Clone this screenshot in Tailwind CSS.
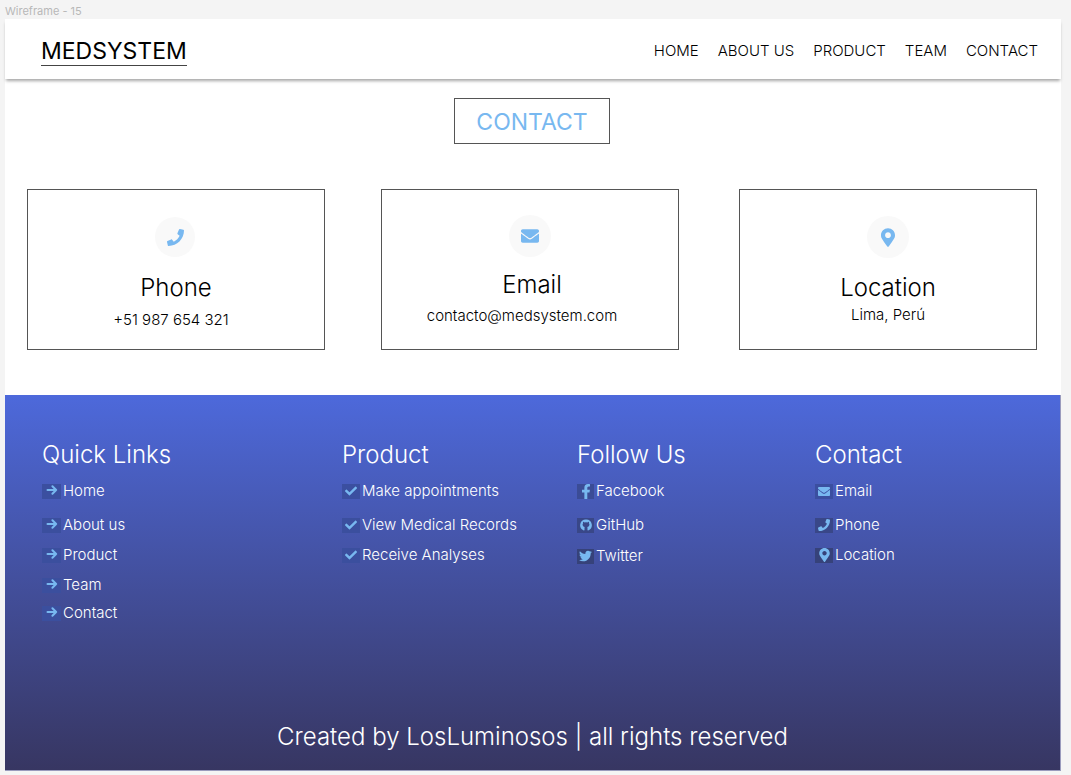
<!DOCTYPE html>
<html lang="en">
<head>
<meta charset="utf-8">
<meta name="viewport" content="width=device-width, initial-scale=1">
<title>MEDSYSTEM - Contact</title>
<script src="https://cdn.jsdelivr.net/npm/@tailwindcss/browser@4"></script>
</head>
<body class="min-h-screen bg-[#f4f4f4] pr-[10px] pb-[5px] pl-[5px] font-['Inter',sans-serif] text-[15px] leading-6 font-light text-black">
<svg class="hidden" aria-hidden="true">
  <symbol id="arrow" viewBox="0 0 12 12"><path d="M1.500 6h8.700M6.400 2.200 10.200 6 6.400 9.800" fill="none" stroke="currentColor" stroke-width="2" stroke-linecap="round" stroke-linejoin="round"/></symbol>
  <symbol id="check" viewBox="0 0 512 512"><path fill="currentColor" d="M173.900 439.400l-166.400-166.400c-10-10-10-26.200 0-36.200l36.200-36.200c10-10 26.200-10 36.200 0L192 312.700 432.100 72.600c10-10 26.200-10 36.200 0l36.200 36.200c10 10 10 26.200 0 36.200l-294.400 294.400c-10 10-26.200 10-36.200 0z"/></symbol>
  <symbol id="phone" viewBox="0 0 512 512"><path fill="currentColor" d="M493.400 24.600l-104-24c-11.300-2.600-22.900 3.300-27.500 13.900l-48 112c-4.200 9.800-1.400 21.300 6.900 28l60.600 49.600c-36 76.700-98.900 140.500-177.200 177.200l-49.600-60.600c-6.800-8.300-18.200-11.100-28-6.900l-112 48C3.900 366.500-2 378.100.6 389.400l24 104C27.100 504.200 36.700 512 48 512c256.100 0 464-207.500 464-464 0-11.200-7.700-20.900-18.600-23.400z"/></symbol>
  <symbol id="mail" viewBox="0 64 512 384"><path fill="currentColor" d="M502.300 190.800c3.900-3.100 9.700-.2 9.700 4.700V400c0 26.500-21.500 48-48 48H48c-26.500 0-48-21.500-48-48V195.600c0-5 5.700-7.800 9.700-4.700 22.400 17.400 52.100 39.500 154.100 113.600 21.100 15.400 56.700 47.800 92.200 47.600 35.700.3 72-32.800 92.300-47.600 102-74.100 131.600-96.300 154-113.700zM256 320c23.200.4 56.600-29.200 73.400-41.400 132.700-96.300 142.800-104.700 173.400-128.700 5.800-4.500 9.200-11.500 9.200-18.900v-19c0-26.500-21.500-48-48-48H48c-26.500 0-48 21.500-48 48v19c0 7.400 3.400 14.300 9.200 18.900 30.600 23.900 40.700 32.400 173.400 128.700 16.800 12.200 50.200 41.800 73.400 41.400z"/></symbol>
  <symbol id="pin" viewBox="0 0 384 512"><path fill="currentColor" d="M172.300 501.700C27 291 0 269.400 0 192 0 86 86 0 192 0s192 86 192 192c0 77.400-27 99-172.300 309.700-9.500 13.800-29.900 13.800-39.500 0zM192 272c44.200 0 80-35.800 80-80s-35.800-80-80-80-80 35.800-80 80 35.800 80 80 80z"/></symbol>
  <symbol id="facebook" viewBox="0 0 320 512"><path fill="currentColor" d="M279.100 288l14.200-92.700h-88.900v-60.100c0-25.300 12.400-50.100 52.200-50.100h40.400V6.300S260.400 0 225.400 0c-73.200 0-121.100 44.400-121.100 124.700v70.600H22.900V288h81.400v224h100.200V288z"/></symbol>
  <symbol id="github" viewBox="0 0 12 12"><path fill="currentColor" d="M6 .4a5.700 5.700 0 0 0-2.200 11c.5.100.7-.1.700-.4V8.900c0-.4.1-.7.300-.9-1.300-.2-2.200-.9-2.200-2.400 0-.5.100-1 .5-1.400-.1-.3-.2-.8.100-1.400.5 0 1 .300 1.400.6a5 5 0 0 1 2.800 0c.4-.3.9-.6 1.400-.6.3.6.2 1.100.1 1.400.4.4.5.900.5 1.400 0 1.500-.9 2.200-2.200 2.400.2.200.3.500.3.900V11c0 .3.200.5.700.4A5.700 5.700 0 0 0 6 .4z"/></symbol>
  <symbol id="twitter" viewBox="0 48 512 416"><path fill="currentColor" d="M459.400 151.700c.3 4.500.3 9.100.3 13.600 0 138.700-105.600 298.600-298.600 298.600-59.500 0-114.700-17.200-161.100-47.100 8.400 1 16.600 1.300 25.300 1.300 49.100 0 94.200-16.600 130.300-44.800-46.100-1-84.800-31.200-98.100-72.800 6.500 1 13 1.600 19.800 1.600 9.400 0 18.800-1.300 27.600-3.600-48.100-9.700-84.100-52-84.100-103v-1.300c14 7.800 30.200 12.700 47.400 13.300-28.300-18.800-46.800-51-46.800-87.400 0-19.500 5.200-37.400 14.300-53 51.700 63.700 129.300 105.300 216.400 109.800-1.600-7.800-2.600-15.900-2.600-24 0-57.800 46.800-104.900 104.900-104.900 30.200 0 57.500 12.700 76.700 33.100 23.700-4.500 46.500-13.300 66.600-25.300-7.800 24.400-24.400 44.800-46.100 57.800 21.100-2.300 41.600-8.100 60.400-16.200-14.300 20.800-32.200 39.300-52.600 54.300z"/></symbol>
</svg>

<p class="h-[19px] pt-[3px] text-[11px] leading-4 font-normal text-[#b8b8b8]">Wireframe - 15</p>

<div class="bg-white">
  <header class="flex h-[60px] items-center justify-between pt-1 pr-[23px] pl-9 shadow-[0_3px_3px_-1px_rgba(0,0,0,0.35)]">
    <a href="#" class="border-b border-[#444] text-[23px] leading-7 font-normal">MEDSYSTEM</a>
    <nav class="flex gap-[19px]">
      <a href="#">HOME</a>
      <a href="#">ABOUT US</a>
      <a href="#">PRODUCT</a>
      <a href="#">TEAM</a>
      <a href="#">CONTACT</a>
    </nav>
  </header>

  <main class="pt-[19px] pr-6 pb-[45px] pl-[22px]">
    <h1 class="mx-auto w-fit border border-[#555] px-[21px] pt-[7px] pb-[5px] text-[23px] leading-8 font-normal text-[#78b8f0]">CONTACT</h1>
    <div class="mt-[45px] flex text-center">
      <section class="flex h-[161px] flex-1 flex-col items-center border border-[#555] pt-[27px]">
        <span class="mr-0.5 flex size-10 items-center justify-center rounded-full bg-[#f9f9f9] text-[#78b8f0]"><svg class="size-[17px]"><use href="#phone"/></svg></span>
        <h2 class="mt-[15px] text-2xl leading-8">Phone</h2>
        <p class="mt-1 pr-2.5">+51 987 654 321</p>
      </section>
      <section class="ml-14 flex h-[161px] flex-1 flex-col items-center border border-[#555] pt-[25px]">
        <span class="flex size-[42px] items-center justify-center rounded-full bg-[#f9f9f9] text-[#78b8f0]"><svg class="h-[14px] w-[18px]"><use href="#mail"/></svg></span>
        <h2 class="mt-3 pl-1 text-2xl leading-8">Email</h2>
        <p class="mt-[3px] pr-4">contacto@medsystem.com</p>
      </section>
      <section class="ml-15 flex h-[161px] flex-1 flex-col items-center border border-[#555] pt-[26px]">
        <span class="flex size-[42px] items-center justify-center rounded-full bg-[#f9f9f9] text-[#78b8f0]"><svg class="h-[19px] w-[14px]"><use href="#pin"/></svg></span>
        <h2 class="mt-[14px] text-2xl leading-8">Location</h2>
        <p class="-mt-px">Lima, Perú</p>
      </section>
    </div>
  </main>

  <footer class="border-r border-b border-[#9a9bbd] bg-linear-to-b from-[#4d69db] to-[#373662] pt-11 pb-[17px] text-white">
    <div class="grid h-[252px] grid-cols-[300fr_235fr_238fr_245fr] pl-[37px]">
      <section>
        <h2 class="text-2xl leading-8">Quick Links</h2>
        <ul class="mt-2">
          <li><a href="#" class="flex items-center gap-0.5"><span class="flex h-[15px] w-[19px] justify-end bg-[#3b4fa0] pr-[3px] text-[#78b8f0]"><svg class="size-3"><use href="#arrow"/></svg></span>Home</a></li>
          <li class="mt-[10px]"><a href="#" class="flex items-center gap-0.5"><span class="flex h-[15px] w-[19px] justify-end bg-[#3b4f9e] pr-[3px] text-[#78b8f0]"><svg class="size-3"><use href="#arrow"/></svg></span>About us</a></li>
          <li class="mt-1.5"><a href="#" class="flex items-center gap-0.5"><span class="flex h-[15px] w-[19px] justify-end bg-[#3b4f9e] pr-[3px] text-[#78b8f0]"><svg class="size-3"><use href="#arrow"/></svg></span>Product</a></li>
          <li class="mt-1.5"><a href="#" class="flex items-center gap-0.5"><span class="flex h-[15px] w-[19px] justify-end bg-[#3b4f9e] pr-[3px] text-[#78b8f0]"><svg class="size-3"><use href="#arrow"/></svg></span>Team</a></li>
          <li class="mt-1"><a href="#" class="flex items-center gap-0.5"><span class="flex h-[15px] w-[19px] justify-end bg-[#3b4f9e] pr-[3px] text-[#78b8f0]"><svg class="size-3"><use href="#arrow"/></svg></span>Contact</a></li>
        </ul>
      </section>
      <section>
        <h2 class="text-2xl leading-8">Product</h2>
        <ul class="mt-2">
          <li><a href="#" class="flex items-center gap-0.5"><span class="flex h-[15px] w-[18px] items-center justify-center bg-[#3b4fa0] text-[#78b8f0]"><svg class="size-3"><use href="#check"/></svg></span>Make appointments</a></li>
          <li class="mt-[10px]"><a href="#" class="flex items-center gap-0.5"><span class="flex h-[15px] w-[18px] items-center justify-center bg-[#3b4f9e] text-[#78b8f0]"><svg class="size-3"><use href="#check"/></svg></span>View Medical Records</a></li>
          <li class="mt-1.5"><a href="#" class="flex items-center gap-0.5"><span class="flex h-[15px] w-[18px] items-center justify-center bg-[#3b4f9e] text-[#78b8f0]"><svg class="size-3"><use href="#check"/></svg></span>Receive Analyses</a></li>
        </ul>
      </section>
      <section>
        <h2 class="text-2xl leading-8">Follow Us</h2>
        <ul class="mt-2">
          <li><a href="#" class="flex items-center gap-0.5"><span class="flex h-[15px] w-[17px] items-center justify-center bg-[#3b4c96] text-[#78b8f0]"><svg class="h-[15px] w-[10px]"><use href="#facebook"/></svg></span>Facebook</a></li>
          <li class="mt-[10px]"><a href="#" class="flex items-center gap-0.5"><span class="flex h-[15px] w-[17px] items-center justify-center bg-[#394788] text-[#78b8f0]"><svg class="size-3"><use href="#github"/></svg></span>GitHub</a></li>
          <li class="mt-[7px]"><a href="#" class="flex items-center gap-0.5"><span class="flex h-[15px] w-[17px] items-center justify-center bg-[#36427a] text-[#78b8f0]"><svg class="h-3 w-[13px]"><use href="#twitter"/></svg></span>Twitter</a></li>
        </ul>
      </section>
      <section>
        <h2 class="text-2xl leading-8">Contact</h2>
        <ul class="mt-2">
          <li><a href="#" class="flex items-center gap-0.5"><span class="flex h-[15px] w-[18px] items-center justify-center bg-[#3b4fa0] text-[#78b8f0]"><svg class="h-[9px] w-3"><use href="#mail"/></svg></span>Email</a></li>
          <li class="mt-[10px]"><a href="#" class="flex items-center gap-0.5"><span class="flex h-[15px] w-[18px] items-center justify-center bg-[#394788] text-[#78b8f0]"><svg class="size-3"><use href="#phone"/></svg></span>Phone</a></li>
          <li class="mt-1.5"><a href="#" class="flex items-center gap-0.5"><span class="flex h-[15px] w-[18px] items-center justify-center bg-[#36427a] text-[#78b8f0]"><svg class="h-[14px] w-[11px]"><use href="#pin"/></svg></span>Location</a></li>
        </ul>
      </section>
    </div>
    <p class="mt-[30px] text-center text-2xl leading-8">Created by LosLuminosos | all rights reserved</p>
  </footer>
</div>
</body>
</html>
